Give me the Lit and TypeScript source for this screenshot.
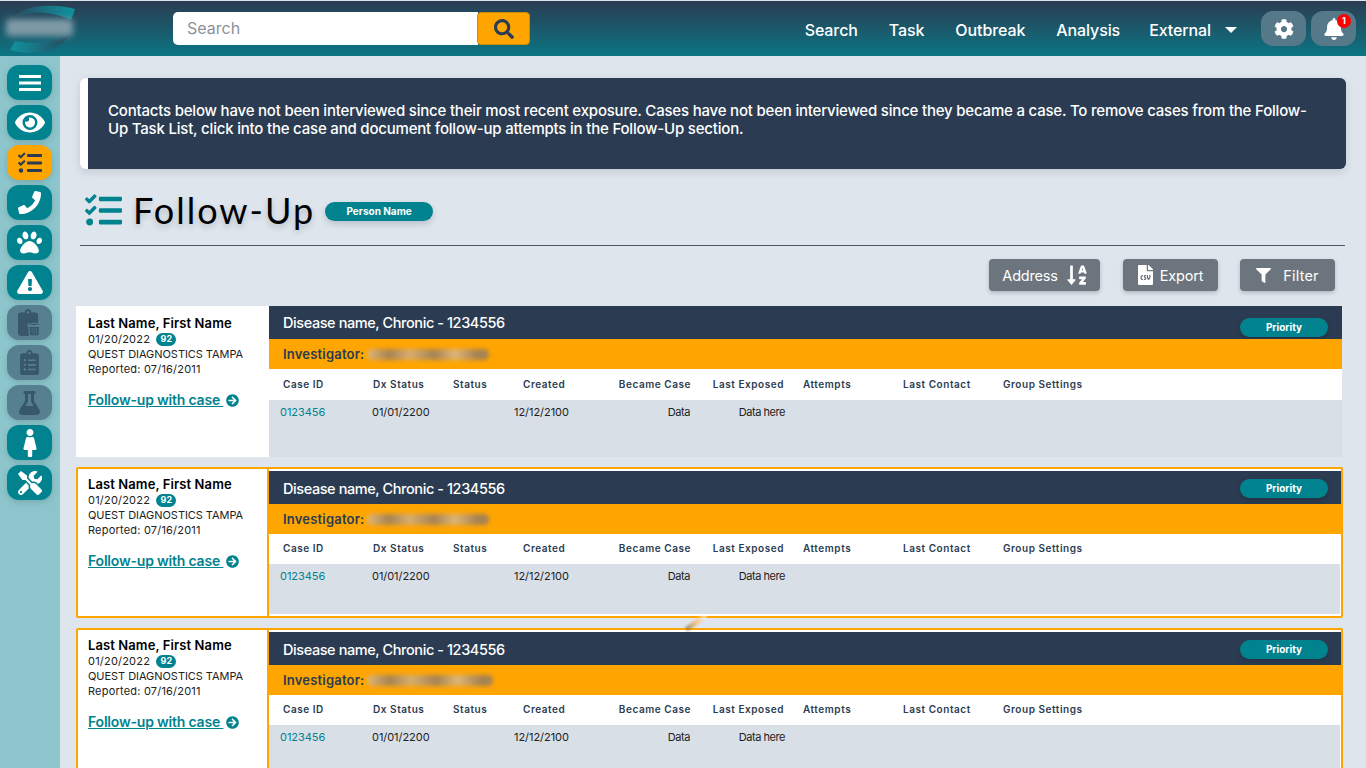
import { LitElement, html, css } from 'lit';
import { customElement } from 'lit/decorators.js';

const ICONS: Record<string, [string, string]> = {
  bars: ['0 0 22 16', 'M0 0h22v3H0zM0 6.5h22v3H0zM0 13h22v3H0z'],
  eye: ['0 0 576 512', 'M572.52 241.4C518.29 135.59 410.93 64 288 64S57.68 135.64 3.48 241.41a32.35 32.35 0 0 0 0 29.19C57.71 376.41 165.07 448 288 448s230.32-71.64 284.52-177.41a32.35 32.35 0 0 0 0-29.19zM288 400a144 144 0 1 1 144-144 143.93 143.93 0 0 1-144 144zm0-240a95.31 95.31 0 0 0-25.31 3.79 47.85 47.85 0 0 1-66.9 66.9A95.78 95.78 0 1 0 288 160z'],
  tasks: ['0 0 512 512', 'M139.61 35.5a12 12 0 0 0-17 0L58.93 98.81l-22.7-22.12a12 12 0 0 0-17 0L3.53 92.41a12 12 0 0 0 0 17l47.59 47.4a12.78 12.78 0 0 0 17.61 0l15.59-15.62L156.52 69a12.09 12.09 0 0 0 .09-17zm0 159.19a12 12 0 0 0-17 0l-63.68 63.72-22.7-22.1a12 12 0 0 0-17 0L3.53 252a12 12 0 0 0 0 17L51 316.5a12.77 12.77 0 0 0 17.6 0l15.7-15.69 72.2-72.22a12 12 0 0 0 .09-16.9zM64 368c-26.49 0-48.59 21.5-48.59 48S37.53 464 64 464a48 48 0 0 0 0-96zm432 16H208a16 16 0 0 0-16 16v32a16 16 0 0 0 16 16h288a16 16 0 0 0 16-16v-32a16 16 0 0 0-16-16zm0-320H208a16 16 0 0 0-16 16v32a16 16 0 0 0 16 16h288a16 16 0 0 0 16-16V80a16 16 0 0 0-16-16zm0 160H208a16 16 0 0 0-16 16v32a16 16 0 0 0 16 16h288a16 16 0 0 0 16-16v-32a16 16 0 0 0-16-16z'],
  phone: ['0 0 512 512', 'M493.4 24.6l-104-24c-11.3-2.6-22.9 3.3-27.5 13.9l-48 112c-4.2 9.8-1.4 21.3 6.9 28l60.6 49.6c-36 76.7-98.9 140.5-177.2 177.2l-49.6-60.6c-6.8-8.3-18.2-11.1-28-6.9l-112 48C3.9 366.5-2 378.1.6 389.4l24 104C27.1 504.2 36.7 512 48 512c256.1 0 464-207.5 464-464 0-11.2-7.7-20.9-18.6-23.4z'],
  paw: ['0 0 512 512', 'M256 224c-79.41 0-192 122.76-192 200.25 0 34.9 26.81 55.75 71.74 55.75 48.84 0 81.09-25.08 120.26-25.08 39.51 0 71.85 25.08 120.26 25.08 44.93 0 71.74-20.85 71.74-55.75C448 346.76 335.41 224 256 224zm-147.28-12.61c-10.4-34.65-42.44-57.09-71.56-50.13-29.12 6.96-44.29 40.69-33.89 75.34 10.4 34.65 42.44 57.09 71.56 50.13 29.12-6.96 44.29-40.69 33.89-75.34zm84.72-20.78c30.94-8.14 46.42-49.94 34.58-93.36s-46.52-72.01-77.46-63.87-46.42 49.94-34.58 93.36c11.84 43.42 46.52 72.02 77.46 63.87zm281.39-29.34c-29.12-6.96-61.15 15.48-71.56 50.13-10.4 34.65 4.77 68.38 33.89 75.34 29.12 6.96 61.15-15.48 71.56-50.13 10.4-34.65-4.77-68.38-33.89-75.34zm-156.27 29.34c30.94 8.14 65.62-20.45 77.46-63.87 11.84-43.42-3.64-85.21-34.58-93.36s-65.62 20.45-77.46 63.87c-11.84 43.42 3.64 85.22 34.58 93.36z'],
  warn: ['0 0 576 512', 'M569.517 440.013C587.975 472.007 564.806 512 527.94 512H48.054c-36.937 0-59.999-40.055-41.577-71.987L246.423 24.035c18.467-32.009 64.72-31.951 83.154 0l239.94 416.007zM288 354c-25.405 0-46 20.595-46 46s20.595 46 46 46 46-20.595 46-46-20.595-46-46-46zm-43.673-165.346l7.418 136c.347 6.364 5.609 11.346 11.982 11.346h48.546c6.373 0 11.635-4.982 11.982-11.346l7.418-136c.375-6.874-5.098-12.654-11.982-12.654h-63.383c-6.884 0-12.356 5.78-11.981 12.654z'],
  clipList: ['0 0 384 512', 'M336 64h-80c0-35.3-28.7-64-64-64s-64 28.7-64 64H48C21.5 64 0 85.5 0 112v352c0 26.5 21.5 48 48 48h288c26.5 0 48-21.5 48-48V112c0-26.5-21.5-48-48-48zM96 424c-13.3 0-24-10.7-24-24s10.7-24 24-24 24 10.7 24 24-10.7 24-24 24zm0-96c-13.3 0-24-10.7-24-24s10.7-24 24-24 24 10.7 24 24-10.7 24-24 24zm0-96c-13.3 0-24-10.7-24-24s10.7-24 24-24 24 10.7 24 24-10.7 24-24 24zm96-192c13.3 0 24 10.7 24 24s-10.7 24-24 24-24-10.7-24-24 10.7-24 24-24zm128 368c0 4.4-3.6 8-8 8H168c-4.4 0-8-3.6-8-8v-16c0-4.4 3.6-8 8-8h144c4.4 0 8 3.6 8 8v16zm0-96c0 4.4-3.6 8-8 8H168c-4.4 0-8-3.6-8-8v-16c0-4.4 3.6-8 8-8h144c4.4 0 8 3.6 8 8v16zm0-96c0 4.4-3.6 8-8 8H168c-4.4 0-8-3.6-8-8v-16c0-4.4 3.6-8 8-8h144c4.4 0 8 3.6 8 8v16z'],
  flask: ['0 0 448 512', 'M437.2 403.5L320 215V64h8c13.3 0 24-10.7 24-24V24c0-13.3-10.7-24-24-24H120c-13.3 0-24 10.7-24 24v16c0 13.3 10.7 24 24 24h8v151L10.8 403.5C-18.5 450.6 15.3 512 70.9 512h306.2c55.7 0 89.4-61.5 60.1-108.5zM137.9 320l48.2-77.6c3.7-5.2 5.8-11.6 5.8-18.4V64h64v160c0 6.9 2.2 13.2 5.8 18.4l48.2 77.6h-172z'],
  female: ['0 0 256 512', 'M128 0c35.346 0 64 28.654 64 64s-28.654 64-64 64c-35.346 0-64-28.654-64-64S92.654 0 128 0m119.283 354.179l-48-192A24 24 0 0 0 176 144h-11.36c-22.711 10.443-49.59 10.894-73.28 0H80a24 24 0 0 0-23.283 18.179l-48 192C4.935 369.305 16.383 384 32 384h56v104c0 13.255 10.745 24 24 24h32c13.255 0 24-10.745 24-24V384h56c15.596 0 27.071-14.671 23.283-29.821z'],
  tools: ['0 0 512 512', 'M501.1 395.7L384 278.6c-23.1-23.1-57.6-27.6-85.4-13.9L192 158.1V96L64 0 0 64l96 128h62.1l106.6 106.6c-13.6 27.8-9.2 62.3 13.9 85.4l117.1 117.1c14.6 14.6 38.2 14.6 52.7 0l52.7-52.7c14.5-14.6 14.5-38.2 0-52.7zM331.7 225c28.3 0 54.9 11 74.9 31l19.4 19.4c15.8-6.9 30.8-16.5 43.8-29.5 37.1-37.1 49.7-89.3 37.9-136.7-2.2-9-13.5-12.1-20.1-5.5l-74.4 74.4-67.9-11.3L334 98.9l74.4-74.4c6.6-6.6 3.4-17.9-5.7-20.2-47.4-11.7-99.6.9-136.6 37.9-28.5 28.5-41.9 66.1-41.2 103.6l82.1 82.1c8.1-1.9 16.5-2.9 24.7-2.9zm-103.9 82l-56.7-56.7L18.7 402.8c-25 25-25 65.5 0 90.5s65.5 25 90.5 0l123.6-123.6c-7.6-19.9-9.9-41.6-5-62.7zM64 472c-13.2 0-24-10.8-24-24 0-13.3 10.7-24 24-24s24 10.7 24 24c0 13.2-10.7 24-24 24z'],
  search: ['0 0 512 512', 'M505 442.7L405.3 343c-4.5-4.5-10.6-7-17-7H372c27.6-35.3 44-79.7 44-128C416 93.1 322.9 0 208 0S0 93.1 0 208s93.1 208 208 208c48.3 0 92.7-16.4 128-44v16.3c0 6.4 2.5 12.5 7 17l99.7 99.7c9.4 9.4 24.6 9.4 33.9 0l28.3-28.3c9.4-9.4 9.4-24.6.1-34zM208 336c-70.7 0-128-57.2-128-128 0-70.7 57.2-128 128-128 70.7 0 128 57.2 128 128 0 70.7-57.2 128-128 128z'],
  cog: ['0 0 512 512', 'M487.4 315.7l-42.6-24.6c4.3-23.2 4.3-47 0-70.2l42.6-24.6c4.9-2.8 7.1-8.6 5.5-14-11.1-35.6-30-67.8-54.7-94.6-3.8-4.1-10-5.1-14.8-2.3L380.8 110c-17.9-15.4-38.5-27.3-60.8-35.1V25.8c0-5.6-3.9-10.5-9.4-11.7-36.7-8.2-74.3-7.8-109.2 0-5.5 1.2-9.4 6.1-9.4 11.7V75c-22.2 7.9-42.8 19.8-60.8 35.1L88.7 85.5c-4.9-2.8-11-1.9-14.8 2.3-24.7 26.7-43.6 58.9-54.7 94.6-1.7 5.4.6 11.2 5.5 14L67.3 221c-4.3 23.2-4.3 47 0 70.2l-42.6 24.6c-4.9 2.8-7.1 8.6-5.5 14 11.1 35.6 30 67.8 54.7 94.6 3.8 4.1 10 5.1 14.8 2.3l42.6-24.6c17.9 15.4 38.5 27.3 60.8 35.1v49.2c0 5.6 3.9 10.5 9.4 11.7 36.7 8.2 74.3 7.8 109.2 0 5.5-1.2 9.4-6.1 9.4-11.7v-49.2c22.2-7.9 42.8-19.8 60.8-35.1l42.6 24.6c4.9 2.8 11 1.9 14.8-2.3 24.7-26.7 43.6-58.9 54.7-94.6 1.5-5.5-.7-11.3-5.6-14.1zM256 336c-44.1 0-80-35.9-80-80s35.9-80 80-80 80 35.9 80 80-35.9 80-80 80z'],
  bell: ['0 0 448 512', 'M224 512c35.32 0 63.97-28.65 63.97-64H160.03c0 35.35 28.65 64 63.97 64zm215.39-149.71c-19.32-20.76-55.47-51.99-55.47-154.29 0-77.7-54.48-139.9-127.94-155.16V32c0-17.67-14.32-32-31.98-32s-31.98 14.33-31.98 32v20.84C118.56 68.1 64.08 130.3 64.08 208c0 102.3-36.15 133.53-55.47 154.29-6 6.45-8.66 14.16-8.61 21.71.11 16.4 12.98 32 32.1 32h383.8c19.12 0 32-15.6 32.1-32 .05-7.55-2.61-15.27-8.61-21.71z'],
  filter: ['0 0 512 512', 'M487.976 0H24.028C2.71 0-8.047 25.866 7.058 40.971L192 225.941V432c0 7.831 3.821 15.17 10.237 19.662l80 55.98C298.02 518.69 320 507.493 320 487.98V225.941l184.947-184.97C520.021 25.896 509.338 0 487.976 0z'],
  arrow: ['0 0 512 512', 'M256 8c137 0 248 111 248 248S393 504 256 504 8 393 8 256 119 8 256 8zm-28.9 143.6l75.5 72.4H120c-13.3 0-24 10.7-24 24v16c0 13.3 10.7 24 24 24h182.6l-75.5 72.4c-9.7 9.3-9.9 24.8-.4 34.3l11 10.9c9.4 9.4 24.6 9.4 33.9 0L404.3 273c9.4-9.4 9.4-24.6 0-33.9L271.6 106.3c-9.4-9.4-24.6-9.4-33.9 0l-11 10.9c-9.5 9.6-9.3 25.1.4 34.4z'],
  sortAlpha: ['0 0 448 512', 'M176 352h-48V48a16 16 0 0 0-16-16H80a16 16 0 0 0-16 16v304H16c-14.19 0-21.36 17.24-11.29 27.31l80 96a16 16 0 0 0 22.62 0l80-96C197.35 369.26 190.22 352 176 352zm240-64H288a16 16 0 0 0-16 16v32a16 16 0 0 0 16 16h56l-61.26 70.45A32 32 0 0 0 272 446.37V464a16 16 0 0 0 16 16h128a16 16 0 0 0 16-16v-32a16 16 0 0 0-16-16h-56l61.26-70.45A32 32 0 0 0 432 321.63V304a16 16 0 0 0-16-16zm31.06-85.38l-59.27-160A16 16 0 0 0 372.72 32h-41.44a16 16 0 0 0-15.07 10.62l-59.27 160A16 16 0 0 0 272 224h24.83a16 16 0 0 0 15.29-11.27l4.42-12.73h70.92l4.42 12.73A16 16 0 0 0 407 224h24.83a16 16 0 0 0 15.23-21.38zM335.61 144L352 96l16.39 48z'],
  csv: ['0 0 384 512', 'M224 136V0H24C10.7 0 0 10.7 0 24v464c0 13.3 10.7 24 24 24h336c13.3 0 24-10.7 24-24V160H248c-13.2 0-24-10.8-24-24zm-96 144c0 4.42-3.58 8-8 8h-8c-8.84 0-16 7.16-16 16v32c0 8.84 7.16 16 16 16h8c4.42 0 8 3.58 8 8v16c0 4.42-3.58 8-8 8h-8c-26.51 0-48-21.49-48-48v-32c0-26.51 21.49-48 48-48h8c4.42 0 8 3.58 8 8v16zm44.27 104H160c-4.42 0-8-3.58-8-8v-16c0-4.42 3.58-8 8-8h12.27c5.95 0 10.41-3.5 10.41-6.62 0-1.3-.75-2.66-2.12-3.84l-21.89-18.77c-8.47-7.22-13.33-17.48-13.33-28.14 0-21.3 19.02-38.62 42.41-38.62H200c4.42 0 8 3.58 8 8v16c0 4.42-3.58 8-8 8h-12.27c-5.95 0-10.41 3.5-10.41 6.62 0 1.3.75 2.66 2.12 3.84l21.89 18.77c8.47 7.22 13.33 17.48 13.33 28.14.01 21.29-19 38.62-42.39 38.62zM256 264v20.8c0 20.27 5.7 40.17 16 56.88 10.3-16.7 16-36.61 16-56.88V264c0-4.42 3.58-8 8-8h16c4.42 0 8 3.58 8 8v20.8c0 35.48-12.88 68.89-36.28 94.09-3.02 3.25-7.27 5.11-11.72 5.11s-8.7-1.86-11.72-5.11c-23.4-25.2-36.28-58.61-36.28-94.09V264c0-4.42 3.58-8 8-8h16c4.42 0 8 3.58 8 8zm121-159L279.1 7c-4.5-4.5-10.6-7-17-7H256v128h128v-6.1c0-6.3-2.5-12.4-7-16.9z'],
};

const CLIP_PLAIN = 'M384 112v352c0 26.51-21.49 48-48 48H48c-26.51 0-48-21.49-48-48V112c0-26.51 21.49-48 48-48h80c0-35.29 28.71-64 64-64s64 28.71 64 64h80c26.51 0 48 21.49 48 48zM192 40c-13.255 0-24 10.745-24 24s10.745 24 24 24 24-10.745 24-24-10.745-24-24-24z';
const TRASH = 'M432 32H312l-9.4-18.7A24 24 0 0 0 281.1 0H166.8a23.72 23.72 0 0 0-21.4 13.3L136 32H16A16 16 0 0 0 0 48v32a16 16 0 0 0 16 16h416a16 16 0 0 0 16-16V48a16 16 0 0 0-16-16zM53.2 467a48 48 0 0 0 47.9 45h245.8a48 48 0 0 0 47.9-45L416 128H32z';

const icon = (name: string, cls = '') => html`<svg class=${cls} viewBox=${ICONS[name][0]} fill="currentColor"><path d=${ICONS[name][1]}></path></svg>`;

const SIDE = [
  { name: 'bars', w: 22, h: 16, cls: '' },
  { name: 'eye', w: 30, h: 27, cls: '' },
  { name: 'tasks', w: 24, h: 24, cls: 'active' },
  { name: 'phone', w: 23, h: 23, cls: '' },
  { name: 'paw', w: 25, h: 25, cls: '' },
  { name: 'warn', w: 26, h: 23, cls: '' },
  { name: 'clipTrash', w: 23, h: 27, cls: 'off' },
  { name: 'clipList', w: 19, h: 25, cls: 'off' },
  { name: 'flask', w: 21, h: 24, cls: 'off' },
  { name: 'female', w: 14, h: 28, cls: '' },
  { name: 'tools', w: 24, h: 24, cls: '' },
];

const COLS = ['Case ID', 'Dx Status', 'Status', 'Created', 'Became Case', 'Last Exposed', 'Attempts', 'Last Contact', 'Group Settings'];

@customElement('app-root')
export class AppRoot extends LitElement {
  static styles = css`
    :host {
      display: block;
      height: 100vh;
      overflow: hidden;
      background: #dee5ed;
      font-family: 'Inter', 'Liberation Sans', sans-serif;
      color: #212529;
    }
    svg { display: block; }
    .topbar {
      border-top: 1px solid #dee5ed;
      background: linear-gradient(#2b3c52, #0b7583);
      display: flex;
      align-items: center;
      padding: 0 10px 0 5px;
      height: 55px;
    }
    .logo { position: relative; width: 72px; height: 50px; flex: none; }
    .logo svg { width: 72px; height: 50px; }
    .logo-blur {
      position: absolute;
      left: 1px;
      top: 15px;
      width: 67px;
      height: 17px;
      border-radius: 4px;
      background: #7f9aa6;
      filter: blur(3px);
    }
    .search { display: flex; width: 357px; height: 33px; margin-left: 96px; }
    .search-input {
      flex: 1;
      background: #fff;
      border-radius: 5px 0 0 5px;
      color: #8a929a;
      font-size: 16px;
      line-height: 33px;
      padding-left: 14px;
    }
    .search-btn {
      width: 53px;
      background: #ffa500;
      border: 1px solid #c98a12;
      box-sizing: border-box;
      border-radius: 4px;
      color: #2b3c52;
      display: flex;
      align-items: center;
      justify-content: center;
      margin-left: -1px;
    }
    .search-btn svg { width: 20px; height: 20px; }
    .nav { margin-left: auto; padding-top: 2px; display: flex; align-items: center; color: #fff; font-size: 16px; font-weight: 500; letter-spacing: -0.1px; }
    .nav span { margin-right: 31px; }
    .nav .ext { margin-left: -2px; margin-right: 14px; }
    .caret { width: 0; height: 0; border-left: 6px solid transparent; border-right: 6px solid transparent; border-top: 6px solid #fff; margin-right: 24px; }
    .tool {
      position: relative;
      width: 45px;
      height: 35px;
      border-radius: 12px;
      background: #56798a;
      color: #fff;
      display: flex;
      align-items: center;
      justify-content: center;
      margin-left: 5px;
    }
    .tool svg { width: 20px; height: 22px; }
    .tool.first { margin-left: 0; }
    .dot {
      position: absolute;
      top: 3px;
      right: 5px;
      width: 14px;
      height: 14px;
      border-radius: 50%;
      background: #f00;
      color: #fff;
      font-size: 9px;
      font-weight: 700;
      line-height: 14px;
      text-align: center;
    }
    .body { display: flex; }
    .side {
      width: 60px;
      flex: none;
      height: 712px;
      background: #8cc6cc;
      padding: 9px 0 0 7px;
      box-sizing: border-box;
      display: flex;
      flex-direction: column;
      gap: 5px;
    }
    .side-btn {
      width: 45px;
      height: 35px;
      border-radius: 12px;
      background: #00838f;
      color: #fff;
      display: flex;
      align-items: center;
      justify-content: center;
      box-shadow: 0 2px 6px rgba(0, 0, 0, 0.15);
    }
    .side-btn.active { background: #ffa500; color: #2b3c52; }
    .side-btn.off { background: #56808f; color: #38576b; }
    .main { flex: 1; padding: 22px 20px 0; position: relative; min-width: 0; }
    .banner {
      height: 91px;
      box-sizing: border-box;
      background: #2b3c52;
      border-left: 8px solid #fff;
      border-radius: 6px;
      padding: 24px 30px 0 20px;
      color: #fff;
      font-size: 15px;
      line-height: 18px;
      font-weight: 500;
      letter-spacing: -0.2px;
      box-shadow: 0 3px 8px rgba(0, 0, 0, 0.12);
    }
    .title {
      height: 77px;
      box-sizing: border-box;
      display: flex;
      align-items: center;
      padding: 6px 0 0 5px;
      margin-right: 1px;
      border-bottom: 1px solid #4a5a68;
    }
    .title-icon { width: 37px; height: 37px; color: #00838f; }
    .title h1 {
      margin: 0 10px 0 11px;
      font-family: 'Lato', sans-serif;
      font-weight: 400;
      font-size: 36px;
      letter-spacing: 2px;
      color: #000;
      text-shadow: 0 3px 6px rgba(0, 0, 0, 0.2);
    }
    .pill {
      background: #00838f;
      color: #fff;
      font-size: 10px;
      font-weight: 700;
      border-radius: 10px;
      text-align: center;
      box-shadow: 0 3px 6px rgba(0, 0, 0, 0.16);
    }
    .title .pill { width: 108px; height: 19px; line-height: 19px; margin-top: 2px; }
    .actions { display: flex; justify-content: flex-end; gap: 22px; padding: 13px 11px 15px 0; }
    .btn {
      height: 32px;
      box-sizing: border-box;
      background: #6c757d;
      color: #fff;
      border-radius: 4px;
      font-size: 14.5px;
      letter-spacing: -0.2px;
      display: flex;
      align-items: center;
      justify-content: center;
      box-shadow: 0 2px 4px rgba(0, 0, 0, 0.2);
    }
    .btn.address { width: 111px; gap: 9px; margin-right: 1px; }
    .btn.address svg { width: 20px; height: 22px; }
    .btn.export { width: 95px; gap: 7px; }
    .btn.export svg { width: 15px; height: 20px; }
    .btn.filter { width: 95px; gap: 12px; letter-spacing: 0.2px; }
    .btn.filter svg { width: 15px; height: 15px; }
    .cards { margin-left: -4px; display: flex; flex-direction: column; gap: 10px; width: 1266px; }
    .card { display: flex; height: 151px; box-sizing: border-box; background: #fff; }
    .card.flag { border: 2px solid #ffa500; border-radius: 2px; width: 1267px; }
    .info { width: 193px; flex: none; box-sizing: border-box; padding: 9px 0 0 12px; background: #fff; font-size: 11px; letter-spacing: 0.2px; line-height: 15px; color: #222; }
    .flag .info { width: 191px; border-right: 2px solid #ffa500; padding: 7px 0 0 10px; }
    .name { font-size: 13px; font-weight: 600; line-height: 17px; color: #000; letter-spacing: 0.1px; }
    .quest { letter-spacing: -0.05px; }
    .badge {
      display: inline-block;
      width: 20px;
      height: 13px;
      line-height: 12px;
      border-radius: 7px;
      background: #00838f;
      color: #fff;
      font-size: 9px;
      font-weight: 700;
      text-align: center;
      letter-spacing: 0;
      margin-left: 3px;
      vertical-align: 1px;
    }
    .link { display: flex; align-items: center; gap: 3px; margin-top: 14px; color: #00838f; font-size: 14px; font-weight: 600; letter-spacing: -0.2px; line-height: 18px; }
    .link u { white-space: pre; }
    .link svg { width: 13px; height: 13px; }
    .detail { flex: 1; min-width: 0; display: flex; flex-direction: column; }
    .flag .detail { padding-top: 2px; padding-bottom: 2px; }
    .dark { height: 33px; box-sizing: border-box; flex: none; background: #2b3c52; color: #fff; display: flex; align-items: center; justify-content: space-between; padding: 0 14px; font-size: 14.5px; font-weight: 500; letter-spacing: -0.42px; }
    .flag .dark { padding: 1px 13px 0 14px; }
    .dark .pill { width: 88px; height: 19px; line-height: 19px; margin-top: 9px; letter-spacing: 0; }
    .flag .dark .pill { margin-top: 0; }
    .orange { height: 30px; flex: none; background: #ffa500; display: flex; align-items: center; padding-left: 14px; color: #2b3c52; font-size: 13px; font-weight: 600; letter-spacing: 0.2px; gap: 3px; }
    .blur {
      height: 11px;
      border-radius: 5px;
      background: linear-gradient(90deg, #e3b878, #a58354 18%, #d9ad6e 35%, #a58354 55%, #e0b576 72%, #a58354 90%);
      filter: blur(2px);
    }
    .head, .row { display: grid; font-size: 10px; }
    .head {
      height: 31px;
      box-sizing: border-box;
      padding-bottom: 1px;
      flex: none;
      align-items: center;
      padding-left: 14px;
      background: #fff;
      color: #2b3c52;
      font-weight: 600;
      letter-spacing: 0.55px;
      grid-template-columns: 90px 80px 70px 90px 78px 93px 119px 100px 1fr;
    }
    .flag .head { height: 30px; padding-bottom: 2px; }
    .head .r { text-align: right; }
    .head .a { padding-left: 19px; }
    .row {
      flex: 1;
      align-content: start;
      padding: 5px 0 0 11px;
      background: #d9dfe7;
      color: #222;
      font-size: 11px;
      line-height: 14px;
      letter-spacing: -0.05px;
      grid-template-columns: 92px 142px 60px 116px 95px;
    }
    .flag .row { margin-right: 1px; }
    .row .id { color: #00838f; }
    .row .r { text-align: right; letter-spacing: -0.45px; }
    .smear {
      position: absolute;
      left: 624px;
      top: 564px;
      width: 24px;
      height: 5px;
      background: linear-gradient(90deg, #7a6a4a, #ffb24a 50%, #fff 100%);
      opacity: 0.65;
      filter: blur(1px);
      transform: rotate(-35deg);
    }
  `;

  sideIcon(name: string, w: number, h: number) {
    if (name === 'clipTrash') {
      return html`<svg viewBox="0 0 440 512" fill="currentColor" style="width:${w}px;height:${h}px">
        <path d=${CLIP_PLAIN}></path>
        <g transform="translate(190 270) scale(.54 .47)">
          <path d=${TRASH} stroke="#56808f" stroke-width="44"></path>
          <path d="M150 190v240M224 190v240M298 190v240" stroke="#56808f" stroke-width="24"></path>
        </g>
      </svg>`;
    }
    const [vb, d] = ICONS[name];
    return html`<svg viewBox=${vb} fill="currentColor" style="width:${w}px;height:${h}px"><path d=${d}></path></svg>`;
  }

  renderCard(flag: boolean, blurW: number) {
    return html`
      <div class="card ${flag ? 'flag' : ''}">
        <div class="info">
          <div class="name">Last Name, First Name</div>
          <div>01/20/2022 <span class="badge">92</span></div>
          <div class="quest">QUEST DIAGNOSTICS TAMPA</div>
          <div>Reported: 07/16/2011</div>
          <div class="link"><u>Follow-up with case </u>${icon('arrow')}</div>
        </div>
        <div class="detail">
          <div class="dark">
            <span>Disease name, Chronic - 1234556</span>
            <span class="pill">Priority</span>
          </div>
          <div class="orange">Investigator: <span class="blur" style="width:${blurW}px"></span></div>
          <div class="head">
            ${COLS.map((c, i) => html`<span class=${i === 4 || i === 5 ? 'r' : i === 6 ? 'a' : ''}>${c}</span>`)}
          </div>
          <div class="row">
            <span class="id">0123456</span>
            <span>01/01/2200</span>
            <span>12/12/2100</span>
            <span class="r">Data</span>
            <span class="r">Data here</span>
          </div>
        </div>
      </div>
    `;
  }

  render() {
    return html`
      <div class="topbar">
        <div class="logo">
          <svg viewBox="0 0 72 50">
            <defs>
              <linearGradient id="sw1" x1="0" x2="1" y1="0" y2="0"><stop offset="0" stop-color="#27485c"></stop><stop offset="1" stop-color="#0f93a0"></stop></linearGradient>
              <linearGradient id="sw2" x1="0" x2="1" y1="0" y2="0"><stop offset="0" stop-color="#0f93a0"></stop><stop offset="1" stop-color="#27485c"></stop></linearGradient>
            </defs>
            <path d="M6 16C14 3 42 -2 70 5l-4 11C46 7 20 6 6 16z" fill="url(#sw1)"></path>
            <path d="M5 46l5-9c16 3 38 2 55-6C54 47 26 53 5 46z" fill="url(#sw2)"></path>
          </svg>
          <div class="logo-blur"></div>
        </div>
        <div class="search">
          <div class="search-input">Search</div>
          <div class="search-btn">${icon('search')}</div>
        </div>
        <div class="nav">
          <span>Search</span><span>Task</span><span>Outbreak</span><span>Analysis</span>
          <span class="ext">External</span><i class="caret"></i>
        </div>
        <div class="tool first">${icon('cog')}</div>
        <div class="tool">${icon('bell')}<span class="dot">1</span></div>
      </div>
      <div class="body">
        <div class="side">
          ${SIDE.map(s => html`<div class="side-btn ${s.cls}">${this.sideIcon(s.name, s.w, s.h)}</div>`)}
        </div>
        <div class="main">
          <div class="banner">
            Contacts below have not been interviewed since their most recent exposure. Cases have not been interviewed since they became a case. To remove cases from the Follow-Up Task List, click into the case and document follow-up attempts in the Follow-Up section.
          </div>
          <div class="title">
            ${icon('tasks', 'title-icon')}
            <h1>Follow-Up</h1>
            <span class="pill">Person Name</span>
          </div>
          <div class="actions">
            <div class="btn address">Address ${icon('sortAlpha')}</div>
            <div class="btn export">${icon('csv')} Export</div>
            <div class="btn filter">${icon('filter')} Filter</div>
          </div>
          <div class="cards">
            ${this.renderCard(false, 122)}
            ${this.renderCard(true, 122)}
            ${this.renderCard(true, 126)}
          </div>
          <div class="smear"></div>
        </div>
      </div>
    `;
  }
}
